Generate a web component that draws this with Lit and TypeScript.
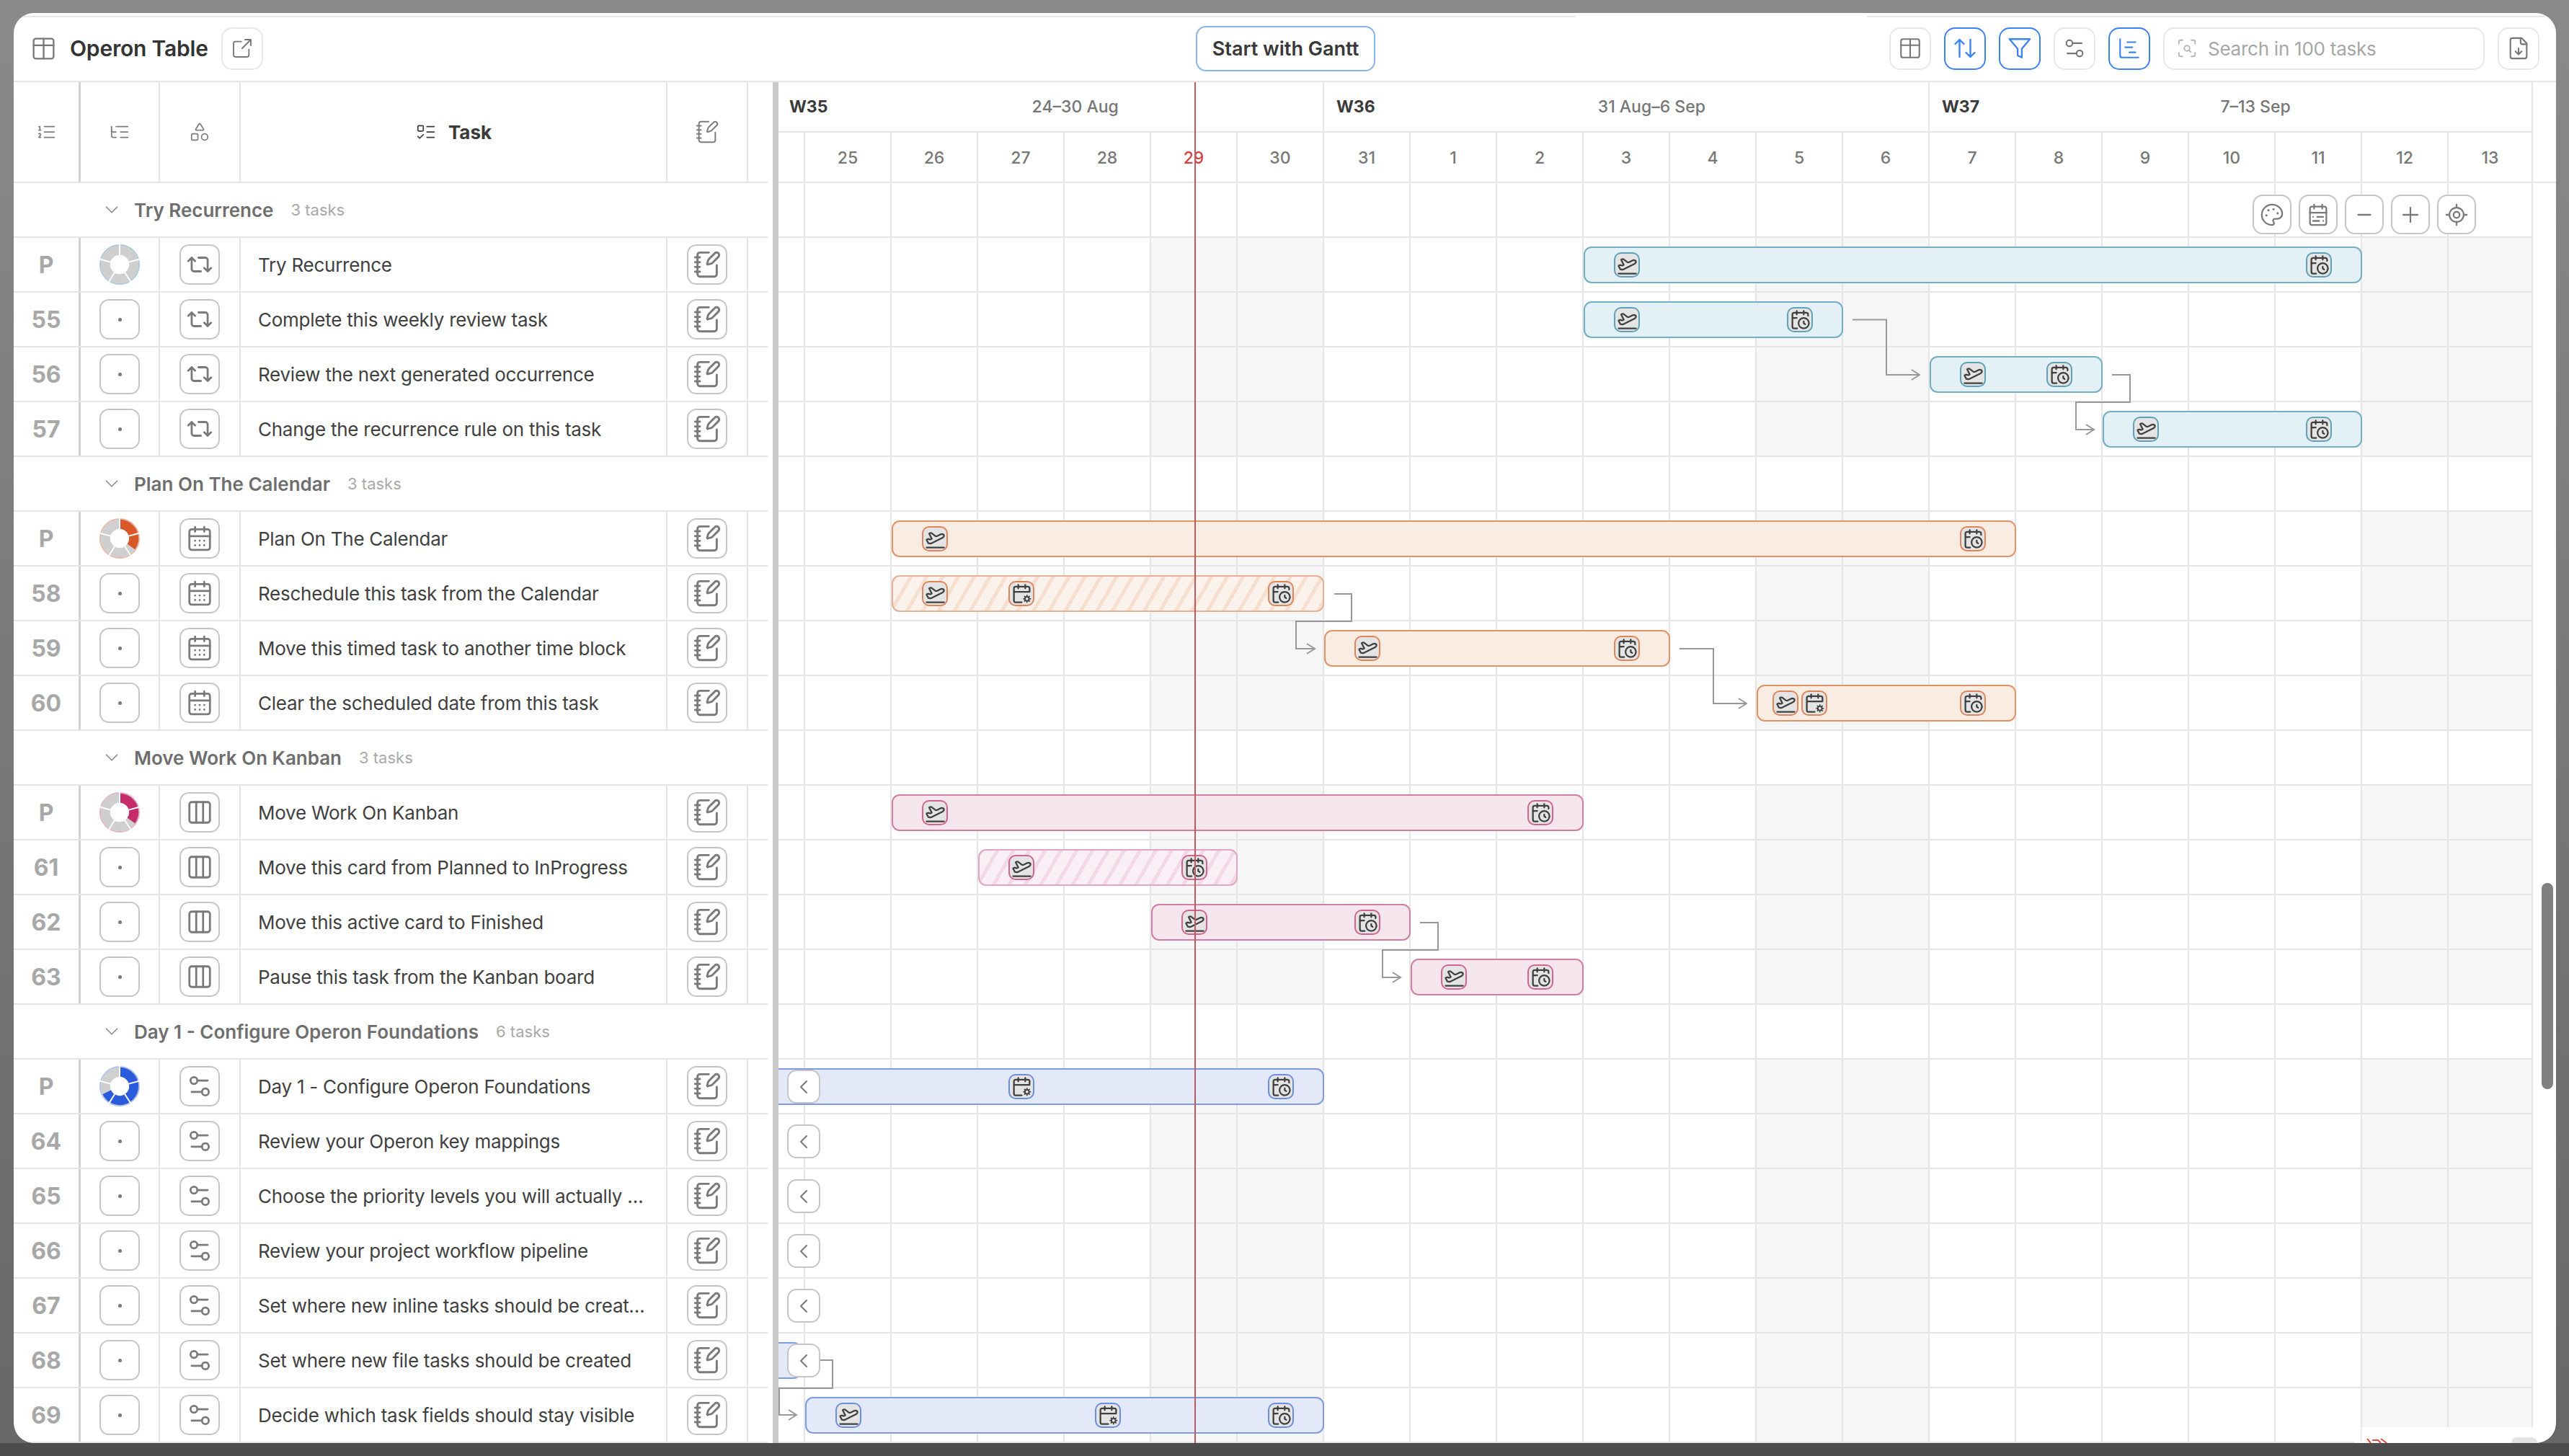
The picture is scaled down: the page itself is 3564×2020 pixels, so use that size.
import { LitElement, html, css, svg, nothing } from "lit";
import { customElement } from "lit/decorators.js";

const ICONS: Record<string, any> = {
  table: svg`<rect x="3" y="3" width="18" height="18" rx="2"/><path d="M3 9h18M12 3v18"/>`,
  external: svg`<path d="M21 3l-9 9M15 3h6v6M11 5H5a2 2 0 0 0-2 2v12a2 2 0 0 0 2 2h12a2 2 0 0 0 2-2v-6"/>`,
  sort: svg`<path d="m21 16-4 4-4-4M17 20V4M3 8l4-4 4 4M7 4v16"/>`,
  filter: svg`<path d="M22 3H2l8 9.46V19l4 2v-8.54L22 3z"/>`,
  sliders: svg`<path d="M14 17H5M19 7h-9"/><circle cx="17" cy="17" r="3"/><circle cx="7" cy="7" r="3"/>`,
  gantt: svg`<path d="M10 6h8M12 16h6M3 3v16a2 2 0 0 0 2 2h16M8 11h7"/>`,
  scan: svg`<path d="M3 7V5a2 2 0 0 1 2-2h2M17 3h2a2 2 0 0 1 2 2v2M21 17v2a2 2 0 0 1-2 2h-2M7 21H5a2 2 0 0 1-2-2v-2"/><circle cx="12" cy="12" r="3"/><path d="m16 16-1.9-1.9"/>`,
  filedown: svg`<path d="M15 2H6a2 2 0 0 0-2 2v16a2 2 0 0 0 2 2h12a2 2 0 0 0 2-2V7Z"/><path d="M14 2v4a2 2 0 0 0 2 2h4M12 18v-6M9 15l3 3 3-3"/>`,
  palette: svg`<path d="M12 22a1 1 0 0 1 0-20 10 9 0 0 1 10 9 5 5 0 0 1-5 5h-2.25a1.75 1.75 0 0 0-1.4 2.8l.3.4a1.75 1.75 0 0 1-1.4 2.8z"/><g fill="currentColor" stroke="none"><circle cx="13.5" cy="6.5" r="1.1"/><circle cx="17.5" cy="10.5" r="1.1"/><circle cx="6.5" cy="12.5" r="1.1"/><circle cx="8.5" cy="7.5" r="1.1"/></g>`,
  calrange: svg`<rect x="4" y="4" width="16" height="18" rx="2"/><path d="M16 2v4M8 2v4M4 10h16M17 14h-6M13 18H7M7 14h.01M17 18h.01"/>`,
  minus: svg`<path d="M6 12h12"/>`,
  plus: svg`<path d="M12 5v14M5 12h14"/>`,
  locate: svg`<path d="M2 12h3M19 12h3M12 2v3M12 19v3"/><circle cx="12" cy="12" r="7"/><circle cx="12" cy="12" r="3"/>`,
  ordered: svg`<path d="M10 12h11M10 18h11M10 6h11M4 10h2M4 6h1v4M6 18H4c0-1 2-2 2-3s-1-1.5-2-1"/>`,
  tree: svg`<path d="M21 12h-8M21 6H8M21 18h-8M3 6v4c0 1.1.9 2 2 2h3M3 10v6c0 1.1.9 2 2 2h3"/>`,
  shapes: svg`<path d="M8.3 10a.7.7 0 0 1-.626-1.079L11.4 3a.7.7 0 0 1 1.198-.043L16.3 8.9a.7.7 0 0 1-.572 1.1Z"/><rect x="3" y="14" width="7" height="7" rx="1"/><circle cx="17.5" cy="17.5" r="3.5"/>`,
  todo: svg`<rect x="3" y="5" width="6" height="6" rx="1"/><path d="m3 17 2 2 4-4M13 6h8M13 12h8M13 18h8"/>`,
  notebook: svg`<path d="M13.4 2H6a2 2 0 0 0-2 2v16a2 2 0 0 0 2 2h12a2 2 0 0 0 2-2v-7.4M2 6h4M2 10h4M2 14h4M2 18h4"/><path d="M21.378 5.626a1 1 0 1 0-3.004-3.004l-5.01 5.012a2 2 0 0 0-.506.854l-.837 2.87a.5.5 0 0 0 .62.62l2.87-.837a2 2 0 0 0 .854-.506z"/>`,
  repeat: svg`<path d="m2 9 3-3 3 3M13 18H7a2 2 0 0 1-2-2V6M22 15l-3 3-3-3M11 6h6a2 2 0 0 1 2 2v10"/>`,
  calendar: svg`<path d="M8 2v4M16 2v4"/><rect x="3" y="4" width="18" height="18" rx="2"/><path d="M3 10h18M8 14h.01M12 14h.01M16 14h.01M8 18h.01M12 18h.01M16 18h.01"/>`,
  columns: svg`<rect x="3" y="3" width="18" height="18" rx="2"/><path d="M9 3v18M15 3v18"/>`,
  plane: svg`<path d="M2 22h20"/><path d="M6.36 17.4 4 17l-2-4 1.1-.55a2 2 0 0 1 1.8 0l.17.1a2 2 0 0 0 1.8 0L8 12 5 6l.9-.45a2 2 0 0 1 2.09.2l4.02 3a2 2 0 0 0 2.1.2l4.19-2.06a2.41 2.41 0 0 1 1.73-.17L21 7a1.4 1.4 0 0 1 .87 1.99l-.38.76c-.23.46-.6.84-1.07 1.08L7.58 17.2a2 2 0 0 1-1.22.18Z"/>`,
  clock: svg`<path d="M16 14v2.2l1.6 1M16 2v4M21 7.5V6a2 2 0 0 0-2-2H5a2 2 0 0 0-2 2v14a2 2 0 0 0 2 2h3.5M3 10h5M8 2v4"/><circle cx="16" cy="16" r="6"/>`,
  cog: svg`<path d="M21 10V6a2 2 0 0 0-2-2H5a2 2 0 0 0-2 2v14a2 2 0 0 0 2 2h7M16 2v4M8 2v4M3 10h18"/><circle cx="18" cy="18" r="2.4" stroke-width="1.6"/><path stroke-width="1.4" d="M18 14v1.4M18 20.6V22M14 18h1.4M20.6 18H22M15.2 15.2l1 1M19.8 19.8l1 1M15.2 20.8l1-1M19.8 16.2l1-1"/>`,
  left: svg`<path d="m15 18-6-6 6-6"/>`,
  down: svg`<path d="m6 9 6 6 6-6"/>`,
};

const ic = (name: string, size: number, sw = 1.75) =>
  html`<svg class="ic" width=${size} height=${size} viewBox="0 0 24 24" fill="none" stroke="currentColor" stroke-width=${sw} stroke-linecap="round" stroke-linejoin="round">${ICONS[name]}</svg>`;

const ring = (pct: number, tone: string) =>
  html`<svg class="ring ${tone}" width="56" height="56" viewBox="0 0 56 56">
    <circle class="ring-edge" cx="28" cy="28" r="27" fill="none" stroke-width="2"/>
    <circle cx="28" cy="28" r="19.7" fill="none" stroke="#cfcfcf" stroke-width="13"/>
    <circle class="ring-fill" cx="28" cy="28" r="19.7" fill="none" stroke-width="13" pathLength="100"
      stroke-dasharray="${pct} 100" transform="rotate(-90 28 28)"/>
    ${[0, 75, 147, 212, 285].map(
      (a) => svg`<line x1="28" y1="0" x2="28" y2="15" stroke="#fff" stroke-width="2" transform="rotate(${a} 28 28)"/>`
    )}
  </svg>`;

interface Chip { d: number; i: string; off?: number }
interface Bar { s: number; e: number; chips: Chip[]; hatch?: boolean; clip?: boolean; clipW?: number }
interface Row { no: string; name: string; bar?: Bar; back?: boolean }
interface Group { title: string; count: string; tone: string; pct: number; icon: string; rows: Row[] }

const p = "plane", c = "clock", g = "cog";
const GROUPS: Group[] = [
  {
    title: "Try Recurrence", count: "3 tasks", tone: "teal", pct: 0, icon: "repeat",
    rows: [
      { no: "P", name: "Try Recurrence", bar: { s: 9, e: 17, chips: [{ d: 9, i: p }, { d: 17, i: c }] } },
      { no: "55", name: "Complete this weekly review task", bar: { s: 9, e: 11, chips: [{ d: 9, i: p }, { d: 11, i: c }] } },
      { no: "56", name: "Review the next generated occurrence", bar: { s: 13, e: 14, chips: [{ d: 13, i: p }, { d: 14, i: c }] } },
      { no: "57", name: "Change the recurrence rule on this task", bar: { s: 15, e: 17, chips: [{ d: 15, i: p }, { d: 17, i: c }] } },
    ],
  },
  {
    title: "Plan On The Calendar", count: "3 tasks", tone: "orange", pct: 35, icon: "calendar",
    rows: [
      { no: "P", name: "Plan On The Calendar", bar: { s: 1, e: 13, chips: [{ d: 1, i: p }, { d: 13, i: c }] } },
      { no: "58", name: "Reschedule this task from the Calendar", bar: { s: 1, e: 5, hatch: true, chips: [{ d: 1, i: p }, { d: 2, i: g }, { d: 5, i: c }] } },
      { no: "59", name: "Move this timed task to another time block", bar: { s: 6, e: 9, chips: [{ d: 6, i: p }, { d: 9, i: c }] } },
      { no: "60", name: "Clear the scheduled date from this task", bar: { s: 11, e: 13, chips: [{ d: 11, i: p, off: -20 }, { d: 11, i: g, off: 20 }, { d: 13, i: c }] } },
    ],
  },
  {
    title: "Move Work On Kanban", count: "3 tasks", tone: "pink", pct: 35, icon: "columns",
    rows: [
      { no: "P", name: "Move Work On Kanban", bar: { s: 1, e: 8, chips: [{ d: 1, i: p }, { d: 8, i: c }] } },
      { no: "61", name: "Move this card from Planned to InProgress", bar: { s: 2, e: 4, hatch: true, chips: [{ d: 2, i: p }, { d: 4, i: c }] } },
      { no: "62", name: "Move this active card to Finished", bar: { s: 4, e: 6, chips: [{ d: 4, i: p }, { d: 6, i: c }] } },
      { no: "63", name: "Pause this task from the Kanban board", bar: { s: 7, e: 8, chips: [{ d: 7, i: p }, { d: 8, i: c }] } },
    ],
  },
  {
    title: "Day 1 - Configure Operon Foundations", count: "6 tasks", tone: "blue", pct: 68, icon: "sliders",
    rows: [
      { no: "P", name: "Day 1 - Configure Operon Foundations", back: true, bar: { s: -1, e: 5, clip: true, chips: [{ d: 2, i: g }, { d: 5, i: c }] } },
      { no: "64", name: "Review your Operon key mappings", back: true },
      { no: "65", name: "Choose the priority levels you will actually use in your vault", back: true },
      { no: "66", name: "Review your project workflow pipeline", back: true },
      { no: "67", name: "Set where new inline tasks should be created by default", back: true },
      { no: "68", name: "Set where new file tasks should be created", back: true, bar: { s: -1, e: -1, clip: true, clipW: 32, chips: [] } },
      { no: "69", name: "Decide which task fields should stay visible", bar: { s: 0, e: 5, chips: [{ d: 0, i: p }, { d: 3, i: g }, { d: 5, i: c }] } },
    ],
  },
];

const DAYS = [25, 26, 27, 28, 29, 30, 31, 1, 2, 3, 4, 5, 6, 7, 8, 9, 10, 11, 12, 13];
const WEEKEND = new Set([4, 5, 11, 12, 18, 19]);
const WEEKS = [
  { w: "W35", r: "24–30 Aug", cls: "w35" },
  { w: "W36", r: "31 Aug–6 Sep", cls: "w36" },
  { w: "W37", r: "7–13 Sep", cls: "w37" },
];
const LINKS = [
  ["M2570 443.5H2617V520H2663", "M2652 513L2663 520L2652 527"],
  ["M2930 520H2955V558H2880V596H2905", "M2894 589L2905 596L2894 603"],
  ["M1851 824H1875V862H1798V900H1824", "M1813 893L1824 900L1813 907"],
  ["M2330 900H2377V976H2423", "M2412 969L2423 976L2412 983"],
  ["M1970 1280H1995V1318H1918V1356H1943", "M1932 1349L1943 1356L1932 1363"],
  ["M1138 1887H1155V1926H1081V1963H1105", "M1094 1956L1105 1963L1094 1970"],
];

@customElement("app-root")
export class AppRoot extends LitElement {
  static styles = css`
    :host {
      display: block;
      width: 3564px;
      height: 2020px;
      box-sizing: border-box;
      padding: 18px 18px 18px 19px;
      font-family: Inter, "Liberation Sans", sans-serif;
      color: #3c3c3c;
      background:
        linear-gradient(to top, #4d4d4d 18px, transparent 18px),
        linear-gradient(#8a8a8a, #676767);
      overflow: hidden;
    }
    * { box-sizing: border-box; }
    .ic { display: block; flex: none; }
    .window {
      position: relative;
      width: 3527px;
      height: 1984px;
      background: #fff;
      border-radius: 28px;
      overflow: hidden;
      display: flex;
      flex-direction: column;
    }
    .tabline { height: 6px; flex: none; display: flex; justify-content: space-between; padding: 0 16px 0 12px; }
    .tabline span { height: 2px; margin-top: 4px; background: #e6e6e6; display: block; }
    .tl-a { width: 2154px; }
    .tl-b { width: 940px; }
    .header {
      height: 90px;
      flex: none;
      display: grid;
      grid-template-columns: 1fr auto 1fr;
      align-items: center;
      padding: 0 23px 2px 23px;
      border-bottom: 2px solid #e6e6e6;
    }
    .h-left, .h-right { display: flex; align-items: center; }
    .h-left { gap: 18px; color: #777; }
    .h-right { justify-content: flex-end; gap: 18px; color: #777; }
    .title { font-size: 30px; font-weight: 600; color: #333; letter-spacing: -0.2px; }
    .tbtn {
      width: 58px; height: 59px; flex: none;
      border: 2px solid #e8e8e8; border-radius: 15px;
      display: flex; align-items: center; justify-content: center;
    }
    .tbtn.on { border-color: #3b82f6; color: #3b82f6; }
    .start {
      height: 63px; width: 249px; margin-left: 2px;
      display: flex; align-items: center; justify-content: center;
      border: 2px solid #8ab4ee; border-radius: 14px;
      font-size: 27px; font-weight: 600; color: #383838;
    }
    .search {
      width: 446px; height: 59px;
      border: 2px solid #e8e8e8; border-radius: 15px;
      display: flex; align-items: center; gap: 14px; padding-left: 16px;
      color: #b5b5b5; font-size: 26px; letter-spacing: -0.25px;
    }
    .search span { color: #a6a6a6; }
    .main { flex: 1; display: flex; min-height: 0; }

    .table { width: 1046px; flex: none; display: flex; flex-direction: column; }
    .divider { width: 8px; margin-left: 7px; flex: none; background: #c9c9c9; }
    .thead, .trow { display: grid; grid-template-columns: 93px 110px 112px 592px 112px 27px; border-bottom: 2px solid #e5e5e5; }
    .thead { height: 140px; color: #7c7c7c; }
    .trow { height: 76px; }
    .cell { display: flex; align-items: center; justify-content: center; border-right: 2px solid #e5e5e5; min-width: 0; }
    .cell.first { border-right: 3px solid #d2d2d2; }
    .cell.last { border-right: 0; }
    .cell.task { gap: 16px; font-size: 26px; font-weight: 700; color: #3a3a3a; }
    .cell.name { justify-content: flex-start; padding: 0 28px 0 24px; font-size: 26px; letter-spacing: -0.25px; color: #404040; }
    .cell.name span { overflow: hidden; white-space: nowrap; text-overflow: ellipsis; }
    .num { font-size: 32px; font-weight: 700; color: #a8a8a8; }
    .chip {
      width: 56px; height: 56px;
      border: 2px solid #c6c6c6; border-radius: 13px;
      display: flex; align-items: center; justify-content: center;
      color: #7a7a7a; background: #fff;
    }
    .dot { width: 5px; height: 5px; border-radius: 50%; background: #7a7a7a; }
    .grp {
      height: 76px; display: flex; align-items: center;
      padding-left: 121px; border-bottom: 2px solid #e5e5e5;
    }
    .grp .ic { color: #8d8d8d; margin-right: 16px; }
    .grp b { font-size: 26px; font-weight: 600; color: #6e6e6e; margin-right: 24px; }
    .grp i { font-style: normal; font-size: 22px; color: #a9a9a9; }

    .ring.teal { --edge: #a9c9d8; --fill: #6aa8c0; }
    .ring.orange { --edge: #e6b9a6; --fill: #d9582a; }
    .ring.pink { --edge: #e2b3c6; --fill: #c62c6c; }
    .ring.blue { --edge: #b3c2ec; --fill: #2a5bdc; }
    .ring-edge { stroke: var(--edge); }
    .ring-fill { stroke: var(--fill); }

    .gantt { position: relative; flex: 1; min-width: 0; }
    .weeks { height: 70px; display: flex; width: 2434px; border-bottom: 2px solid #e5e5e5; }
    .week { display: flex; align-items: center; border-right: 2px solid #e5e5e5; padding: 0 0 1px 17px; }
    .week.w35 { width: 757px; padding-left: 15px; }
    .week.w36 { width: 840px; }
    .week.w37 { width: 837px; }
    .week b { font-size: 23px; font-weight: 700; color: #3a3a3a; }
    .week span { flex: 1; text-align: center; font-size: 23px; font-weight: 500; color: #767676; }
    .dgrid, .grow { display: grid; grid-template-columns: 37px repeat(19, 120px) 117px; width: 2434px; }
    .days-wrap { height: 70px; border-bottom: 2px solid #e5e5e5; }
    .dgrid { height: 68px; }
    .dcell {
      border-right: 2px solid #e5e5e5; display: flex; align-items: center; justify-content: center;
      font-size: 23px; font-weight: 500; color: #777; padding-top: 1px;
    }
    .dcell.today { color: #d24545; }
    .grow-wrap { position: relative; height: 76px; border-bottom: 2px solid #e5e5e5; width: 2434px; }
    .grow { height: 74px; }
    .gcell { border-right: 2px solid #e5e5e5; }
    .gcell.we { background: #f6f6f6; }

    .bar {
      position: absolute; top: 12px; height: 51px;
      border: 2px solid var(--line); border-radius: 11px; background: var(--bg);
    }
    .bar.clip { border-left: 0; border-top-left-radius: 0; border-bottom-left-radius: 0; }
    .bar.hatch {
      border-color: var(--hline);
      background: repeating-linear-gradient(120deg, var(--stripe) 0 5px, var(--hbg) 5px 19px);
    }
    .teal { --line: #73aec5; --bg: #e3f0f6; --chip: #5fa0b9; }
    .orange { --line: #e39266; --bg: #f9ece3; --chip: #e0845a; --hline: #e5b097; --hbg: #fbf2ec; --stripe: #f7dfd0; }
    .pink { --line: #d27ea2; --bg: #f5e6ed; --chip: #d3648f; --hline: #dfa6bf; --hbg: #f9eff4; --stripe: #f3d9e5; }
    .blue { --line: #7c9ce2; --bg: #e3e9f8; --chip: #6b8de0; }
    .bchip {
      position: absolute; top: 6px; width: 36px; height: 35px;
      border: 2px solid var(--chip); border-radius: 10px; background: #e4e4e4;
      display: flex; align-items: center; justify-content: center; color: #3f3f3f;
    }
    .back {
      position: absolute; left: 12px; top: 14px; width: 46px; height: 47px;
      border: 2px solid #c6c6c6; border-radius: 13px; background: #fff;
      display: flex; align-items: center; justify-content: center; color: #777;
    }
    .links { position: absolute; left: 0; top: 0; pointer-events: none; }
    .links path { fill: none; stroke: #989898; stroke-width: 2; }
    .todayline { position: absolute; left: 577px; top: 0; bottom: 0; width: 2px; background: #c25a5e; }
    .tools { position: absolute; left: 2045px; top: 156px; display: flex; gap: 10px; }
    .tools div {
      width: 54px; height: 55px; background: #fff;
      border: 2px solid #c6c6c6; border-radius: 14px;
      display: flex; align-items: center; justify-content: center; color: #7a7a7a;
    }
    .thumb { position: absolute; left: 3507px; top: 1207px; width: 16px; height: 286px; border-radius: 8px; background: #808080; }
    .patch { position: absolute; background: #fff; }
    .patch.a { left: 3257px; top: 1962px; width: 270px; height: 22px; }
    .patch.b { left: 3247px; top: 1982px; width: 10px; height: 2px; }
    .tab { position: absolute; left: 3465px; top: 1976px; width: 36px; height: 8px; border-radius: 8px 8px 0 0; background: #e3e3e3; }
    .scrib { position: absolute; left: 3264px; top: 1978px; }
  `;

  private tableRows() {
    return GROUPS.map(
      (gr) => html`
        <div class="grp">${ic("down", 30, 1.4)}<b>${gr.title}</b><i>${gr.count}</i></div>
        ${gr.rows.map(
          (r) => html`<div class="trow">
            <div class="cell first"><span class="num">${r.no}</span></div>
            <div class="cell">
              ${r.no === "P" ? ring(gr.pct, gr.tone) : html`<div class="chip"><div class="dot"></div></div>`}
            </div>
            <div class="cell"><div class="chip">${ic(gr.icon, 38)}</div></div>
            <div class="cell name"><span>${r.name}</span></div>
            <div class="cell"><div class="chip">${ic("notebook", 40)}</div></div>
            <div class="cell last"></div>
          </div>`
        )}
      `
    );
  }

  private bar(r: Row, tone: string) {
    const b = r.bar;
    if (!b) return nothing;
    const left = b.clip ? 0 : 37 + 120 * b.s;
    const width = b.clipW ?? 37 + 120 * (b.e + 1) - left;
    return html`<div class="bar ${tone} ${b.hatch ? "hatch" : ""} ${b.clip ? "clip" : ""}" style="left:${left}px;width:${width}px">
      ${b.chips.map(
        (ch) => html`<div class="bchip" style="left:${37 + 120 * ch.d + 60 - 18 + (ch.off ?? 0) - left - (b.clip ? 0 : 2)}px">${ic(ch.i, 29, 1.9)}</div>`
      )}
    </div>`;
  }

  private ganttRows() {
    const blank = (we: boolean) => html`
      <div class="grow">
        <div class="gcell"></div>
        ${DAYS.map((_, i) => html`<div class="gcell ${we && WEEKEND.has(i) ? "we" : ""}"></div>`)}
      </div>`;
    return GROUPS.map(
      (gr) => html`
        <div class="grow-wrap">${blank(false)}</div>
        ${gr.rows.map(
          (r) => html`<div class="grow-wrap">
            ${blank(true)} ${this.bar(r, gr.tone)}
            ${r.back ? html`<div class="back">${ic("left", 32, 1.5)}</div>` : nothing}
          </div>`
        )}
      `
    );
  }

  render() {
    return html`<div class="window">
      <div class="tabline"><span class="tl-a"></span><span class="tl-b"></span></div>
      <div class="header">
        <div class="h-left">
          ${ic("table", 37, 1.5)}
          <span class="title">Operon Table</span>
          <div class="tbtn">${ic("external", 32, 1.4)}</div>
        </div>
        <div class="start">Start with Gantt</div>
        <div class="h-right">
          <div class="tbtn">${ic("table", 34, 1.5)}</div>
          <div class="tbtn on">${ic("sort", 36, 1.6)}</div>
          <div class="tbtn on">${ic("filter", 34, 1.6)}</div>
          <div class="tbtn">${ic("sliders", 34, 1.5)}</div>
          <div class="tbtn on">${ic("gantt", 34, 1.5)}</div>
          <div class="search">${ic("scan", 30, 1.5)}<span>Search in 100 tasks</span></div>
          <div class="tbtn">${ic("filedown", 34, 1.5)}</div>
        </div>
      </div>
      <div class="main">
        <div class="table">
          <div class="thead">
            <div class="cell first">${ic("ordered", 30, 1.4)}</div>
            <div class="cell">${ic("tree", 30, 1.4)}</div>
            <div class="cell">${ic("shapes", 30, 1.4)}</div>
            <div class="cell task">${ic("todo", 30, 1.4)}<span>Task</span></div>
            <div class="cell">${ic("notebook", 34, 1.4)}</div>
            <div class="cell last"></div>
          </div>
          ${this.tableRows()}
        </div>
        <div class="divider"></div>
        <div class="gantt">
          <div class="weeks">
            ${WEEKS.map((w) => html`<div class="week ${w.cls}"><b>${w.w}</b><span>${w.r}</span></div>`)}
          </div>
          <div class="days-wrap">
            <div class="dgrid">
              <div class="dcell"></div>
              ${DAYS.map((d) => html`<div class="dcell ${d === 29 ? "today" : ""}">${d}</div>`)}
            </div>
          </div>
          ${this.ganttRows()}
          <svg class="links" width="2466" height="1888" viewBox="1080 114 2466 1888">
            ${LINKS.map((l) => svg`<path d=${l[0]}/><path d=${l[1]}/>`)}
          </svg>
          <div class="tools">
            <div>${ic("palette", 34, 1.6)}</div>
            <div>${ic("calrange", 34, 1.6)}</div>
            <div>${ic("minus", 34, 1.6)}</div>
            <div>${ic("plus", 34, 1.6)}</div>
            <div>${ic("locate", 34, 1.6)}</div>
          </div>
          <div class="todayline"></div>
        </div>
      </div>
      <div class="thumb"></div>
      <div class="patch a"></div>
      <div class="patch b"></div>
      <div class="tab"></div>
      <svg class="scrib" width="30" height="6" viewBox="0 0 30 6">
        <path d="M1 0l5 6M8 2h8l4 4M20 0l8 6" fill="none" stroke="#e5483c" stroke-width="2"/>
      </svg>
    </div>`;
  }
}
